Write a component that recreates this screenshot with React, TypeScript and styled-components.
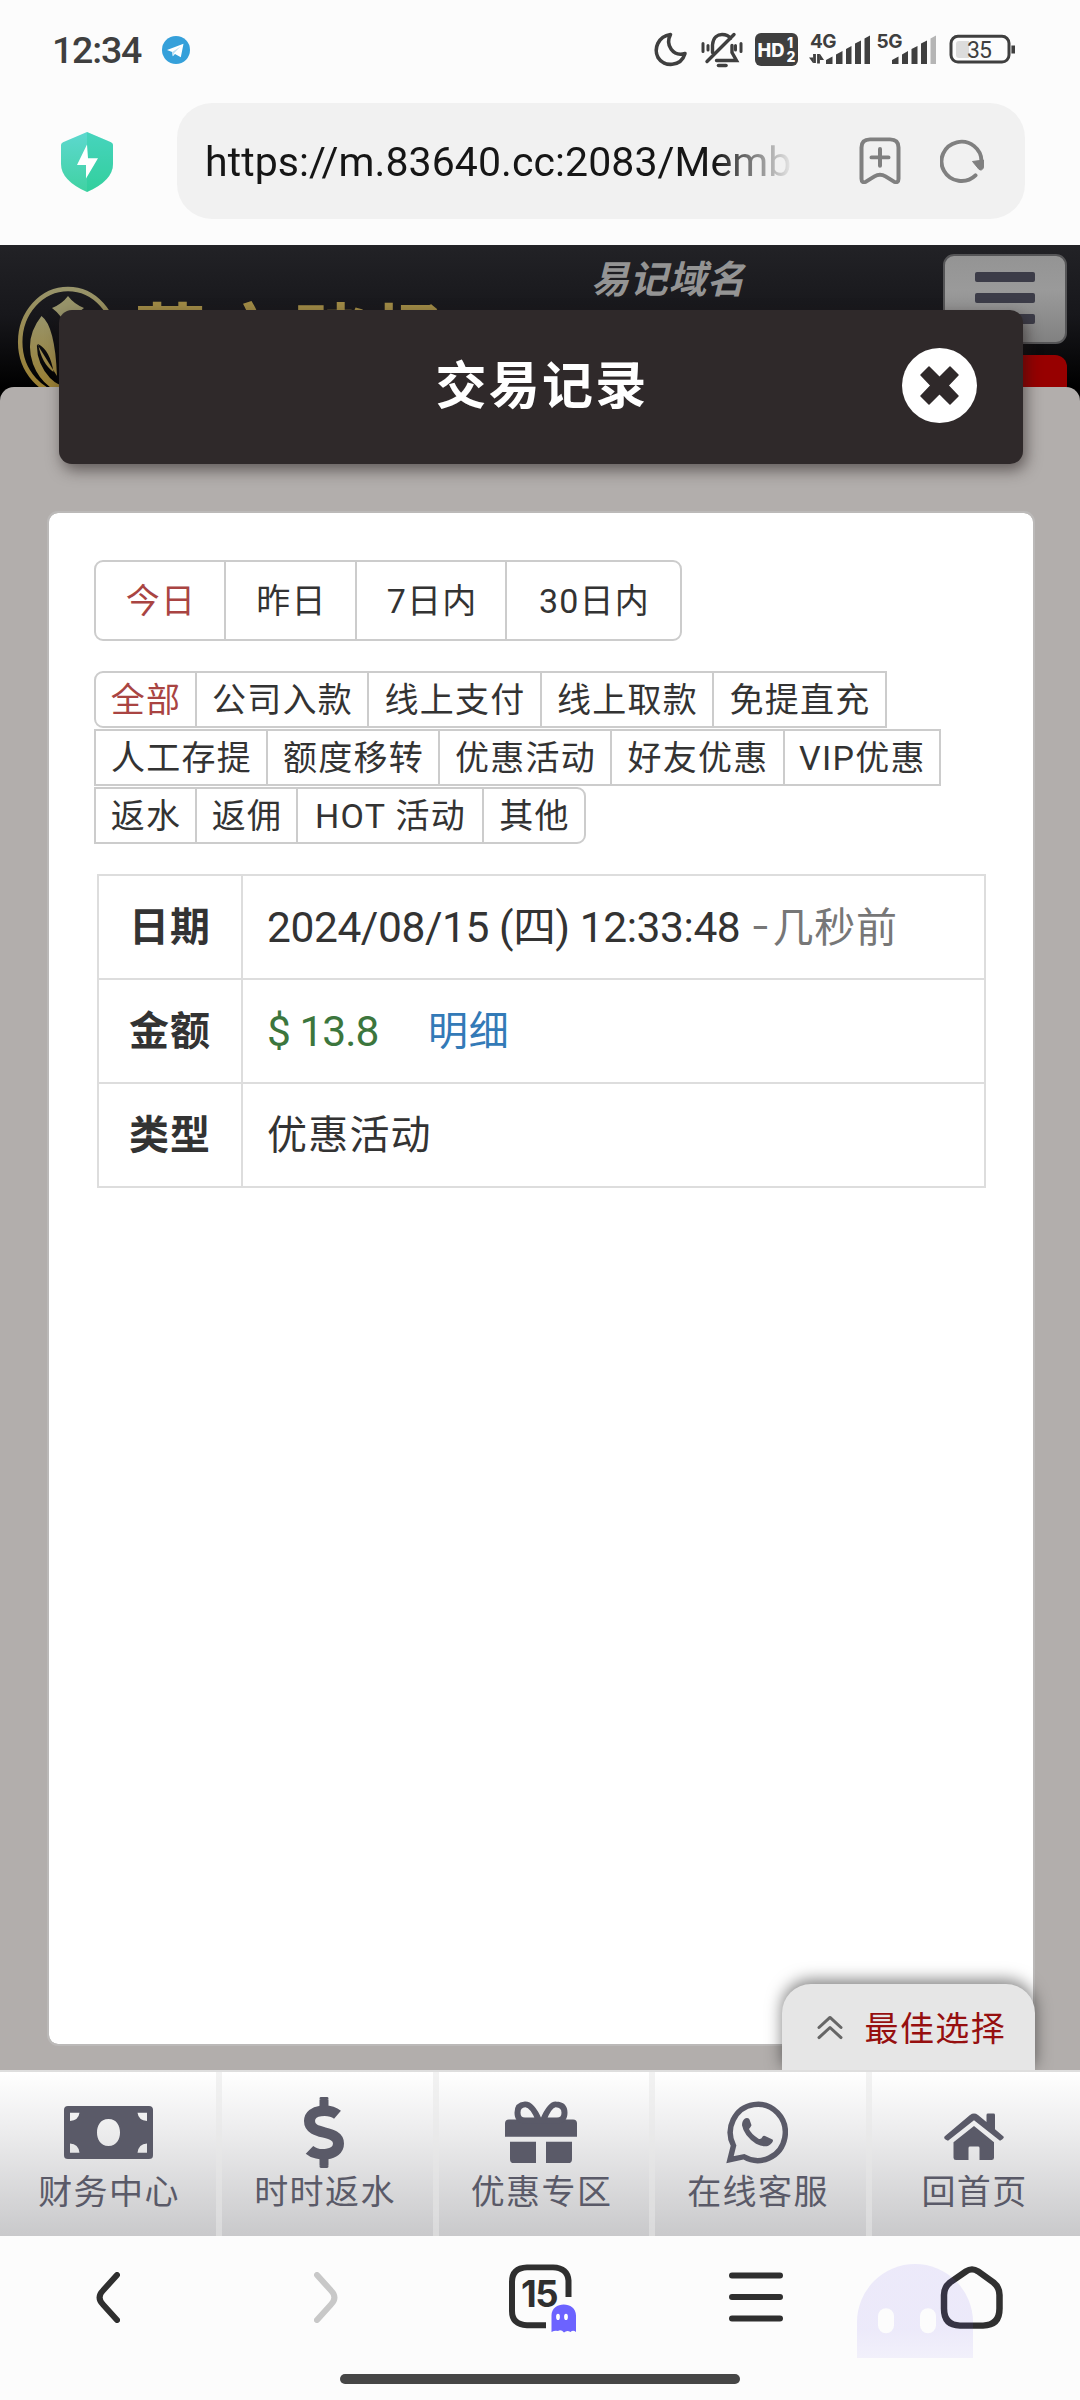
import React from 'react';
import styled, { createGlobalStyle } from 'styled-components';

const GlobalStyle = createGlobalStyle`
  *, *::before, *::after { box-sizing: border-box; }
  body {
    margin: 0;
    background: #fcfcfc;
    font-family: Roboto, "Noto Sans CJK SC", sans-serif;
    color: #333;
  }
  button { font: inherit; color: inherit; background: none; border: 0; padding: 0; }
  svg { display: block; flex: none; }
`;

const Screen = styled.div`
  width: 1080px;
  height: 2400px;
  display: flex;
  flex-direction: column;
  overflow: hidden;
`;

/* ---------- status bar ---------- */

const StatusBar = styled.header`
  height: 103px;
  padding: 0 65px 3px 52px;
  display: flex;
  align-items: center;
  color: #3f3f3f;
`;

const Clock = styled.span`
  width: 88px;
  font-size: 37.5px;
  font-weight: 500;
  letter-spacing: -1.2px;
  line-height: 44px;
  white-space: nowrap;
  margin-right: 22px;
`;

const StatusIcons = styled.div`
  margin-left: auto;
  display: flex;
  align-items: center;
`;

/* ---------- address bar ---------- */

const AddressRow = styled.div`
  height: 142px;
  display: flex;
  align-items: flex-start;
  padding: 0 55px 0 60px;
`;

const ShieldSlot = styled.div`
  width: 117px;
  padding-top: 29px;
`;

const AddressPill = styled.div`
  flex: 1;
  height: 116px;
  border-radius: 35px;
  background: #f1f1f1;
  display: flex;
  align-items: center;
  padding: 0 41px 0 28px;
`;

const Url = styled.div`
  width: 592px;
  overflow: hidden;
  white-space: nowrap;
  font-size: 41px;
  letter-spacing: 0.08px;
  line-height: 56px;
  padding-top: 1px;
  color: #161616;
  mask-image: linear-gradient(90deg, #000 510px, transparent 590px);
`;

const PillIcons = styled.div`
  margin-left: auto;
  display: flex;
  align-items: center;
  gap: 39px;
`;

/* ---------- web page ---------- */

const Page = styled.main`
  position: relative;
  height: 1991px;
  display: flex;
  flex-direction: column;
  background: #000;
`;

const SiteHeader = styled.div`
  height: 142px;
  overflow: hidden;
  display: flex;
  align-items: flex-start;
  padding: 9px 13px 0 16px;
  background: linear-gradient(#222226, #17171b 50%, #000);
`;

const EmblemSlot = styled.div`
  padding-top: 32px;
`;

const BrandName = styled.span`
  margin: 40px 0 0 15px;
  width: 320px;
  font-size: 72px;
  font-weight: 700;
  letter-spacing: 8px;
  line-height: 90px;
  white-space: nowrap;
  color: #a08b46;
`;

const DomainHint = styled.span`
  margin: -1px auto 0 137px;
  font-size: 38px;
  font-weight: 700;
  font-style: italic;
  letter-spacing: 0.6px;
  line-height: 54px;
  color: #949494;
`;

const HeaderActions = styled.div`
  display: flex;
  flex-direction: column;
  align-items: flex-end;
  gap: 11px;
`;

const MenuButton = styled.button`
  width: 124px;
  height: 90px;
  border: 2px solid #555557;
  border-radius: 11px;
  background: linear-gradient(#949494, #9a9a9a 40%, #818181);
  display: flex;
  flex-direction: column;
  align-items: center;
  gap: 11px;
  padding-top: 16px;
`;

const MenuLine = styled.i`
  width: 60px;
  height: 10px;
  border-radius: 2px;
  background: #3c3c48;
`;

const RedButton = styled.div`
  width: 124px;
  height: 60px;
  border-radius: 12px;
  background: #970000;
`;

const Sheet = styled.div`
  flex: 1;
  border-radius: 14px 14px 0 0;
  background: #b2aeac;
`;

const Modal = styled.section`
  position: absolute;
  inset: 0 0 166px;
  padding: 65px 45px 24px 47px;
  display: flex;
  flex-direction: column;
`;

const ModalTitleBar = styled.div`
  height: 154px;
  margin: 0 12px;
  padding: 0 46px 0 121px;
  border-radius: 13px;
  background: #2f292a;
  box-shadow: 3px 6px 15px rgba(30, 20, 20, 0.55);
  display: flex;
  align-items: center;
`;

const ModalTitle = styled.h1`
  flex: 1;
  margin: 0;
  text-align: center;
  font-size: 51px;
  font-weight: 700;
  letter-spacing: 2.2px;
  line-height: 76px;
  padding: 0 0 0 2px;
  color: #fff;
`;

const CloseButton = styled.button`
  margin-bottom: 4px;
`;

const Card = styled.div`
  flex: 1;
  margin-top: 47px;
  padding: 47px 45px;
  border: 2px solid #bbb9b8;
  border-radius: 11px;
  background: #fff;
  background-clip: padding-box;
`;

const TabGroup = styled.div`
  display: flex;
`;

const DateTab = styled.button<{ $w: number; $on?: boolean }>`
  width: ${(p) => p.$w}px;
  height: 81px;
  margin-right: -2px;
  border: 2px solid #ccc;
  font-size: 34px;
  letter-spacing: 1.2px;
  line-height: 50px;
  padding: 1px 0 0 2px;
  color: ${(p) => (p.$on ? '#a94442' : '#333')};
  &:first-child { border-radius: 9px 0 0 9px; }
  &:last-child { border-radius: 0 9px 9px 0; }
`;

const FilterRows = styled.div`
  margin-top: 30px;
  display: flex;
  flex-direction: column;
  gap: 1px;
`;

const FilterTab = styled.button<{ $w: number; $on?: boolean; $round?: string }>`
  width: ${(p) => p.$w}px;
  height: 57px;
  margin-right: -2px;
  border: 2px solid #ccc;
  border-radius: ${(p) => p.$round ?? '0'};
  font-size: 34px;
  letter-spacing: 1.3px;
  line-height: 50px;
  padding: 1px 0 0 1px;
  white-space: nowrap;
  color: ${(p) => (p.$on ? '#a94442' : '#333')};
`;

const Record = styled.dl`
  margin: 30px 0 0 3px;
  width: 889px;
  border: 2px solid #ddd;
  font-size: 40px;
  line-height: 58px;
`;

const RecordRow = styled.div`
  height: 104px;
  display: flex;
  & + & { border-top: 2px solid #ddd; }
  &:first-child { height: 102px; }
`;

const RecordLabel = styled.dt`
  width: 144px;
  border-right: 2px solid #ddd;
  display: flex;
  align-items: center;
  justify-content: center;
  padding-top: 2px;
  font-weight: 700;
  letter-spacing: 1px;
`;

const RecordValue = styled.dd`
  margin: 0;
  padding: 2px 0 0 24px;
  display: flex;
  align-items: center;
  white-space: pre;
  letter-spacing: 1.2px;
`;

const Stamp = styled.span`
  font-size: 42.5px;
  letter-spacing: -0.42px;
  padding-bottom: 1px;
`;

const Ago = styled.span`
  display: flex;
  color: #777;
  font-size: 41px;
  letter-spacing: 0.8px;
`;

const Dash = styled.span`
  width: 22px;
  padding-left: 2px;
  transform: scaleX(1.35) translateY(-2px);
  transform-origin: left center;
`;

const Amount = styled.span`
  color: #3c763d;
  font-size: 42.5px;
  letter-spacing: -1px;
  width: 161px;
`;

const DetailLink = styled.a`
  color: #337ab7;
  letter-spacing: 0.8px;
`;

const BestPick = styled.button`
  position: absolute;
  right: 45px;
  bottom: 166px;
  width: 253px;
  height: 86px;
  border-radius: 29px 29px 0 0;
  background: #e6e6e6;
  box-shadow: 0 -4px 16px rgba(0, 0, 0, 0.5);
  clip-path: inset(-40px -40px 0 -40px);
  display: flex;
  align-items: center;
  padding: 1px 0 0 35px;
  gap: 21.5px;
  font-size: 34px;
  letter-spacing: 1.4px;
  line-height: 50px;
  color: #960f0f;
`;

const PickLabel = styled.span`
  padding-top: 3px;
`;

const SiteNav = styled.nav`
  position: relative;
  height: 166px;
  border-top: 2px solid #dedede;
  display: grid;
  grid-template-columns: 216px 217px 216px 217px 214px;
  background: linear-gradient(#fff, #ededee 35%, #c9c9cb);
`;

const NavItem = styled.a`
  display: flex;
  flex-direction: column;
  align-items: center;
  color: #5a5a68;
  & + & {
    border-left: 6px solid rgba(232, 232, 232, 0.55);
    padding-right: 7px;
  }
  &:last-child { padding-right: 5px; }
`;

const NavIcon = styled.span<{ $drop: number }>`
  height: 95px;
  padding-top: ${(p) => 26 + p.$drop}px;
  display: flex;
  align-items: flex-start;
`;

const NavLabel = styled.span`
  font-size: 34px;
  letter-spacing: 1.4px;
  line-height: 50px;
  padding-left: 2px;
`;

/* ---------- browser toolbar ---------- */

const Toolbar = styled.footer`
  height: 164px;
  display: flex;
  flex-direction: column;
  align-items: center;
  background: #fcfcfc;
`;

const ToolRow = styled.div`
  width: 1080px;
  height: 122px;
  display: grid;
  grid-template-columns: repeat(5, 216px);
`;

const Tool = styled.button<{ $dx?: number }>`
  position: relative;
  display: flex;
  align-items: center;
  justify-content: center;
  padding-left: ${(p) => p.$dx ?? 0}px;
`;

const TabCount = styled.span`
  position: absolute;
  left: 0;
  right: 2px;
  top: 36px;
  text-align: center;
  font: 700 36.5px/44px Inter, sans-serif;
  color: #2f2f2f;
  letter-spacing: -1.5px;
`;

const HomeHandle = styled.div`
  margin-top: 16px;
  width: 400px;
  height: 10px;
  border-radius: 5px;
  background: #464646;
`;

/* ---------- drawings ---------- */

const Telegram = () => (
  <svg width="28" height="28" viewBox="0 0 28 28">
    <circle cx="14" cy="14" r="14" fill="#35a0da" />
    <path d="M5 14 21.500 7.800 18.800 21.200 13 17.900 10.800 20.200 10.200 16z" fill="#fff" />
    <path d="M10.200 16 18.500 10.600 12.200 17 10.800 20.200z" fill="#bcdff2" />
  </svg>
);

const StatusGlyphs = () => (
  <svg width="363" height="40" viewBox="652 30 363 40" fill="none" stroke="#3f3f3f">
    <path d="M670.500 34.500C658 36.500 653.500 48.500 658 57.500 664 67.500 681 67 685 53.500 673 57 665 45 670.500 34.500z" strokeWidth="3.600" strokeLinejoin="round" />
    <g strokeWidth="3.400" strokeLinecap="round">
      <path d="M712.500 52.500V45C713 37 718 34.500 722 34.500 726 34.500 729 36 730.500 38.500M732 45.500V52.500L736.500 60.500H716.500M707 61.500 734 34.500" />
      <path d="M703 43.500V51.500M708 45.500V50M735.500 45.500V50M741 43.500V51.500" strokeWidth="3" />
      <path d="M718.500 65.500H726" strokeWidth="3.600" />
    </g>
    <rect x="755" y="33" width="43" height="33" rx="6" fill="#3f3f3f" stroke="none" />
    <g fill="#fcfcfc" stroke="none" fontFamily="Inter, sans-serif" fontWeight="800">
      <text x="757.500" y="56.500" fontSize="19" textLength="27" lengthAdjust="spacingAndGlyphs">HD</text>
      <text x="787" y="47.500" fontSize="14">1</text>
      <text x="786.500" y="62" fontSize="14">2</text>
    </g>
    <g fill="#3f3f3f" stroke="none" fontFamily="Inter, sans-serif" fontWeight="700" fontSize="19">
      <text x="810" y="48" textLength="26.500">4G</text>
      <text x="876.500" y="48" textLength="26">5G</text>
    </g>
    <path d="M814.500 54V63M818.500 63.500V54" strokeWidth="2.800" />
    <path d="M809 57.500H813V63zM824 60H820V54z" fill="#3f3f3f" stroke="none" />
    <g fill="#3f3f3f" stroke="none">
      <path d="M826 64V60L832.500 56.500V64zM836 64V54.500L842.500 51V64zM846 64V49L851.500 46V64zM855 64V43.500L861 40.500V64zM864.500 64V38.500L870 35.500V64z" />
      <path d="M892 64V60L898.500 56.500V64zM902 64V54.500L908 51V64zM911.500 64V49L917.500 46V64zM921 64V43.500L927 40.500V64z" />
      <path d="M930.500 64V38.500L936 35.500V64z" fill="#b5b5b5" />
    </g>
    <rect x="951" y="36.300" width="58" height="25.800" rx="7" strokeWidth="3" />
    <path d="M956 44a3 3 0 0 1 3-3H969V58H959a3 3 0 0 1-3-3z" fill="#dcdcdc" stroke="none" />
    <text x="967" y="57.500" fill="#3f3f3f" stroke="none" fontFamily="Roboto, sans-serif" fontSize="23" textLength="25">35</text>
    <path d="M1013.200 45.500V53.500" strokeWidth="3.600" />
  </svg>
);

const Shield = () => (
  <svg width="54" height="60" viewBox="0 0 54 62" preserveAspectRatio="none">
    <defs>
      <linearGradient id="shieldFill" x1="0" y1="0" x2="0" y2="1">
        <stop offset="0" stopColor="#5dd8cf" />
        <stop offset="1" stopColor="#40d2a2" />
      </linearGradient>
    </defs>
    <path d="M27 0 51 10.500Q53 11.500 53 13.500V33Q53 50 27 62 1 50 1 33V13.500Q1 11.500 3 10.500z" fill="url(#shieldFill)" />
    <path d="M27 0 51 10.500Q53 11.500 53 13.500V33Q53 50 27 62z" fill="#10c890" opacity=".28" />
    <path d="M27 13 17 34H26V48L38 27H28z" fill="#fff" />
  </svg>
);

const BookmarkAdd = () => (
  <svg width="42" height="48" viewBox="0 0 42 50" preserveAspectRatio="none" fill="none" stroke="#808080" strokeWidth="4" strokeLinecap="round" strokeLinejoin="round">
    <path d="M2.500 11Q2.500 2.500 11 2.500H31Q39.500 2.500 39.500 11V43.500Q39.500 48.500 35 46.500L26.500 41Q21 37.500 15.500 41L7 46.500Q2.500 48.500 2.500 43.500z" />
    <path d="M21 12.500V30M12.500 21.300H29.500" />
  </svg>
);

const Reload = () => (
  <svg width="44" height="44" viewBox="0 0 44 46" preserveAspectRatio="none">
    <path d="M35.500 38A20 20.500 0 1 1 41.500 24" fill="none" stroke="#808080" strokeWidth="4" strokeLinecap="round" />
    <path d="M32.500 23.500 43.500 22V30Q41.500 34 38.800 31.500z" fill="#808080" stroke="#808080" strokeLinejoin="round" />
  </svg>
);

const Emblem = () => (
  <svg width="103" height="112" viewBox="0 0 103 112">
    <defs>
      <linearGradient id="gold" x1="0" y1="0" x2="0" y2="1">
        <stop offset="0" stopColor="#98946a" />
        <stop offset="1" stopColor="#9a7c2c" />
      </linearGradient>
    </defs>
    <ellipse cx="52" cy="56" rx="47.800" ry="53" fill="none" stroke="url(#gold)" strokeWidth="4.500" />
    <path d="M52 10Q58 18 68 22 56 30 52 44 47 30 36 22 46 18 52 10z" fill="#98946a" />
    <path d="M25.500 30Q39 40 41 90L21 58Q20 76 34 92 42 100 52 101V110Q26 102 17 78 8 52 25.500 30zM22 58Q34 64 37.500 86 26 78 22 58z" fillRule="evenodd" fill="url(#gold)" />
  </svg>
);

const CloseIcon = () => (
  <svg width="75" height="75" viewBox="0 0 75 75">
    <circle cx="37.500" cy="37.500" r="37.500" fill="#fff" />
    <path d="M27 19 37.500 29.500 48 19 56 27 46 37.500 56 48 48 56 37.500 45.500 27 56 19 48 29 37.500 19 27z" fill="#2f292a" stroke="#2f292a" strokeWidth="1.500" strokeLinejoin="round" />
  </svg>
);

const ChevronsUp = () => (
  <svg width="26" height="25" viewBox="0 0 26 26" preserveAspectRatio="none" fill="none" stroke="#666" strokeWidth="3" strokeLinecap="round" strokeLinejoin="round">
    <path d="M2 13 13 2.500 24 13M2 23.500 13 13 24 23.500" />
  </svg>
);

const Money = () => (
  <svg width="89" height="53" viewBox="0 0 89 55" preserveAspectRatio="none" fill="currentColor">
    <path fillRule="evenodd" d="M4 0H85Q89 0 89 4V51Q89 55 85 55H4Q0 55 0 51V4Q0 0 4 0zM6 7V15.500Q14.500 15 15.500 7zM83 7H73.500Q74.500 15 83 15.500zM6 48.500H15.500Q14.500 39.500 6 39zM83 48.500V39Q74.500 39.500 73.500 48.500zM44.500 13.500C36 13.500 33 21 33 27.500S36 41.500 44.500 41.500 56 34 56 27.500 53 13.500 44.500 13.500z" />
  </svg>
);

const Dollar = () => (
  <svg width="42" height="71" viewBox="0 0 42 74" preserveAspectRatio="none" fill="none" stroke="currentColor">
    <path d="M34.500 18.500C27 12.500 6.500 12 6.500 25 6.500 41 35.500 33 35.500 48.500 35.500 62 14 62 6.500 55" strokeWidth="11" />
    <path d="M21 2.500V14M21 60V71.500" strokeWidth="9" />
    <path d="M18 1.500H24M18 72.500H24" strokeWidth="3" strokeLinecap="round" />
  </svg>
);

const Gift = () => (
  <svg width="72" height="62" viewBox="0 0 72 64" preserveAspectRatio="none" fill="currentColor">
    <path d="M4 19H68Q72 19 72 23V37H0V23Q0 19 4 19zM5 42H31V64H9Q5 64 5 60zM41 42H67V60Q67 64 63 64H41z" />
    <path d="M34 20Q27 3 20 3.500 12.500 4 12.500 12 12.500 20 20 20zM38 20Q45 3 51 3.500 59.500 4 59.500 12 59.500 20 52 20z" fill="none" stroke="currentColor" strokeWidth="6" />
  </svg>
);

const WhatsApp = () => (
  <svg width="62" height="63" viewBox="0 0 62 65" preserveAspectRatio="none">
    <path d="M4 60.500 7.500 46A27.500 29 0 1 1 18 57.500z" fill="none" stroke="currentColor" strokeWidth="5.500" />
    <path d="M19 18Q16 20 16 25 18 36 30 44 41 50 46 43 48 40 46 39.500L39 36Q37 35.500 36.500 37 35 40 32.500 39 25 34 23 29 24.500 27 25.500 25L23.500 19Q22 17 19 18z" fill="currentColor" />
  </svg>
);

const House = () => (
  <svg width="62" height="48" viewBox="0 0 62 50" preserveAspectRatio="none" fill="currentColor">
    <path d="M31 13.500 51 30.500V46.500Q51 49 48.500 49H36.500V36.500Q36.500 35 35 35H27Q25.500 35 25.500 36.500V49H13Q10.500 49 10.500 46.500V30.500z" />
    <path d="M31 .500Q33 .500 35 2L43.500 9.500V2Q43.500 .500 45 .500H50.500Q52 .500 52 2V17L60.500 24.500Q62 26 57 29L31 7.500 5 29Q0 27 1.500 24.500L27 2Q29 .500 31 .500z" />
  </svg>
);

const Chevron = ({ color, flip }: { color: string; flip?: boolean }) => (
  <svg width="24" height="51" viewBox="0 0 24 51" fill="none" stroke={color} strokeWidth="6" strokeLinecap="round">
    <path d={flip ? 'M3 3 17 18.500Q24 25.500 17 32.500L3 48' : 'M21 3 7 18.500Q0 25.500 7 32.500L21 48'} />
  </svg>
);

const TabsIcon = () => (
  <svg width="72" height="72" viewBox="0 0 72 74" preserveAspectRatio="none">
    <path d="M64.500 37V20Q63.500 7 49 6.500H23Q8 7 8 21.500V51.500Q8 65.500 23 66H42" fill="none" stroke="#2f2f2f" strokeWidth="6" />
    <path d="M47.500 73V56C47.500 41 72 41 72 56V73Q69 70.500 66.500 73 63 70.500 60 73.500 57 70 54 72 51 71 47.500 73z" fill="#6c63ff" />
    <ellipse cx="54" cy="57.500" rx="1.900" ry="3.200" fill="#fff" />
    <ellipse cx="62" cy="57.500" rx="1.900" ry="3.200" fill="#fff" />
  </svg>
);

const MenuIcon = () => (
  <svg width="54" height="52" viewBox="0 0 54 52" stroke="#2f2f2f" strokeWidth="6" strokeLinecap="round">
    <path d="M3 4.500H51M3 26H51M3 47.500H51" />
  </svg>
);

const GhostHome = () => (
  <svg width="216" height="122" viewBox="864 2245 216 126" preserveAspectRatio="none" overflow="visible">
    <defs>
      <linearGradient id="ghostFade" x1="0" y1="0" x2="0" y2="1">
        <stop offset="0.700" stopColor="#6c55e8" stopOpacity=".11" />
        <stop offset="1" stopColor="#6c55e8" stopOpacity=".07" />
      </linearGradient>
    </defs>
    <path d="M966 2281.500Q972 2277.500 978 2281.500L993.500 2293Q999.500 2298 999.500 2306V2320Q999.500 2337.500 983 2337.500H960Q944 2337.500 944 2320V2306Q944 2298 950 2293z" fill="none" stroke="#303030" strokeWidth="6.500" />
    <path d="M857 2371V2334A58 60 0 0 1 973 2334V2371z" fill="url(#ghostFade)" />
    <rect x="878" y="2319.500" width="16" height="26" rx="8" fill="#fcfcfc" />
    <rect x="920" y="2319.500" width="16" height="26" rx="8" fill="#fcfcfc" />
  </svg>
);

/* ---------- data ---------- */

const dateTabs = [
  { text: '今日', w: 132, on: true },
  { text: '昨日', w: 133 },
  { text: '7日内', w: 152 },
  { text: '30日内', w: 177 },
];

const filters = [
  [
    { text: '全部', w: 103, on: true, round: '9px 0 0 9px' },
    { text: '公司入款', w: 174 },
    { text: '线上支付', w: 175 },
    { text: '线上取款', w: 174 },
    { text: '免提直充', w: 175 },
  ],
  [
    { text: '人工存提', w: 174 },
    { text: '额度移转', w: 174 },
    { text: '优惠活动', w: 174 },
    { text: '好友优惠', w: 175 },
    { text: 'VIP优惠', w: 158 },
  ],
  [
    { text: '返水', w: 103 },
    { text: '返佣', w: 103 },
    { text: 'HOT 活动', w: 188 },
    { text: '其他', w: 104, round: '0 9px 9px 0' },
  ],
] as { text: string; w: number; on?: boolean; round?: string }[][];

const navItems = [
  { text: '财务中心', Icon: Money, drop: 8 },
  { text: '时时返水', Icon: Dollar, drop: -1 },
  { text: '优惠专区', Icon: Gift, drop: 3 },
  { text: '在线客服', Icon: WhatsApp, drop: 3 },
  { text: '回首页', Icon: House, drop: 15 },
];

export default function App() {
  return (
    <Screen>
      <GlobalStyle />
      <StatusBar>
        <Clock>12:34</Clock>
        <Telegram />
        <StatusIcons>
          <StatusGlyphs />
        </StatusIcons>
      </StatusBar>
      <AddressRow>
        <ShieldSlot>
          <Shield />
        </ShieldSlot>
        <AddressPill>
          <Url>https://m.83640.cc:2083/Memb</Url>
          <PillIcons>
            <BookmarkAdd />
            <Reload />
          </PillIcons>
        </AddressPill>
      </AddressRow>

      <Page>
        <SiteHeader>
          <EmblemSlot>
            <Emblem />
          </EmblemSlot>
          <BrandName>葡京赌场</BrandName>
          <DomainHint>易记域名</DomainHint>
          <HeaderActions>
            <MenuButton>
              <MenuLine />
              <MenuLine />
              <MenuLine />
            </MenuButton>
            <RedButton />
          </HeaderActions>
        </SiteHeader>
        <Sheet />

        <Modal>
          <ModalTitleBar>
            <ModalTitle>交易记录</ModalTitle>
            <CloseButton aria-label="关闭">
              <CloseIcon />
            </CloseButton>
          </ModalTitleBar>
          <Card>
            <TabGroup>
              {dateTabs.map((t) => (
                <DateTab key={t.text} $w={t.w} $on={t.on}>
                  {t.text}
                </DateTab>
              ))}
            </TabGroup>
            <FilterRows>
              {filters.map((row, i) => (
                <TabGroup key={i}>
                  {row.map((f) => (
                    <FilterTab key={f.text} $w={f.w} $on={f.on} $round={f.round}>
                      {f.text}
                    </FilterTab>
                  ))}
                </TabGroup>
              ))}
            </FilterRows>
            <Record>
              <RecordRow>
                <RecordLabel>日期</RecordLabel>
                <RecordValue>
                  <Stamp>2024/08/15 (四) 12:33:48 </Stamp>
                  <Ago>
                    <Dash>-</Dash>几秒前
                  </Ago>
                </RecordValue>
              </RecordRow>
              <RecordRow>
                <RecordLabel>金额</RecordLabel>
                <RecordValue>
                  <Amount>$ 13.8</Amount>
                  <DetailLink>明细</DetailLink>
                </RecordValue>
              </RecordRow>
              <RecordRow>
                <RecordLabel>类型</RecordLabel>
                <RecordValue>优惠活动</RecordValue>
              </RecordRow>
            </Record>
          </Card>
        </Modal>

        <BestPick>
          <ChevronsUp />
          <PickLabel>最佳选择</PickLabel>
        </BestPick>

        <SiteNav>
          {navItems.map(({ text, Icon, drop }) => (
            <NavItem key={text}>
              <NavIcon $drop={drop}>
                <Icon />
              </NavIcon>
              <NavLabel>{text}</NavLabel>
            </NavItem>
          ))}
        </SiteNav>
      </Page>

      <Toolbar>
        <ToolRow>
          <Tool aria-label="后退">
            <Chevron color="#2f2f2f" />
          </Tool>
          <Tool aria-label="前进" $dx={4}>
            <Chevron color="#c8c8c8" flip />
          </Tool>
          <Tool>
            <TabsIcon />
            <TabCount>15</TabCount>
          </Tool>
          <Tool aria-label="菜单">
            <MenuIcon />
          </Tool>
          <Tool aria-label="主页">
            <GhostHome />
          </Tool>
        </ToolRow>
        <HomeHandle />
      </Toolbar>
    </Screen>
  );
}
